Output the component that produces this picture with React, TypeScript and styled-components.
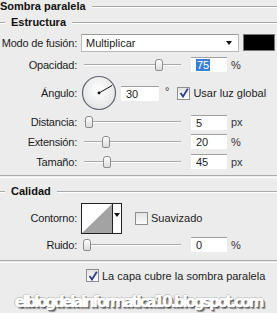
import styled, { createGlobalStyle } from "styled-components"

const Global = createGlobalStyle`
  html, body {
    margin: 0;
    padding: 0;
    background: #ececec;
  }
  body {
    font-family: "Liberation Sans", Arial, sans-serif;
    font-size: 11px;
    color: #1c1c1c;
  }
`

const Panel = styled.div`
  width: 277px;
  height: 313px;
  background: #ececec;
  overflow: hidden;
  display: flex;
  flex-direction: column;
`

const Heading = styled.div<{ $indent?: number; $h: number }>`
  display: flex;
  align-items: center;
  height: ${p => p.$h}px;
  font-weight: bold;
  color: #111;

  &::before {
    content: "";
    width: ${p => p.$indent ?? 0}px;
    margin-right: ${p => (p.$indent ? 6 : 0)}px;
    border-top: 1px solid #a9a9a9;
    box-shadow: 0 1px 0 #fff;
  }
  &::after {
    content: "";
    flex: 1;
    margin-left: 6px;
    border-top: 1px solid #a9a9a9;
    box-shadow: 0 1px 0 #fff;
  }
`

const Divider = styled.div<{ $mt: number }>`
  margin-top: ${p => p.$mt}px;
  border-top: 1px solid #a9a9a9;
  box-shadow: 0 1px 0 #fff;
  height: 1px;
`

const Row = styled.div<{ $h: number; $mt?: number }>`
  display: flex;
  align-items: center;
  height: ${p => p.$h}px;
  margin-top: ${p => p.$mt ?? 0}px;
`

const Label = styled.div`
  width: 77px;
  text-align: right;
  padding-right: 4px;
  flex: none;
  white-space: nowrap;
  letter-spacing: -0.2px;
`

const Select = styled.div`
  width: 158px;
  height: 18px;
  background: #fff;
  border: 1px solid #b8b8b8;
  border-top-color: #9a9a9a;
  display: flex;
  align-items: center;
  justify-content: space-between;
  padding: 0 6px 0 4px;
  box-sizing: border-box;
`

const Arrow = styled.span`
  width: 0;
  height: 0;
  border-left: 3.5px solid transparent;
  border-right: 3.5px solid transparent;
  border-top: 4px solid #111;
`

const Swatch = styled.div`
  width: 30px;
  height: 15px;
  margin-left: 4px;
  background: #000;
  border: 1px solid #777;
`

const Track = styled.div`
  position: relative;
  width: 97px;
  height: 16px;
  margin-left: 3px;
  flex: none;

  &::before {
    content: "";
    position: absolute;
    left: 0;
    right: 0;
    top: 7px;
    border-top: 1px solid #a8a8a8;
    border-bottom: 1px solid #fff;
  }
`

const Thumb = styled.div<{ $x: number }>`
  position: absolute;
  left: ${p => p.$x - 3}px;
  top: 2px;
  width: 6px;
  height: 10px;
  border: 1px solid #8c8c8c;
  border-radius: 3px 3px 2px 2px;
  background: linear-gradient(#fefefe, #dcdcdc);
`

const Field = styled.div<{ $w?: number; $ml?: number }>`
  width: ${p => p.$w ?? 36}px;
  height: 15px;
  margin-left: ${p => p.$ml ?? 10}px;
  background: #fff;
  border-top: 1px solid #a0a0a0;
  box-sizing: border-box;
  display: flex;
  align-items: center;
  padding-left: 5px;
  flex: none;
`

const Selected = styled.span`
  background: #3a7fd6;
  color: #fff;
  padding: 0 1px;
`

const Unit = styled.span<{ $up?: boolean }>`
  margin-left: 4px;
  color: #333;
  ${p => (p.$up ? "align-self: flex-start; margin-top: 10px; margin-left: 6px;" : "")}
`

const Check = styled.div<{ $ml?: number }>`
  display: flex;
  align-items: center;
  margin-left: ${p => p.$ml ?? 0}px;
  gap: 3px;
`

const Box = styled.div`
  width: 11px;
  height: 11px;
  border: 1px solid #8e8e8e;
  background: linear-gradient(#e4e4e4, #fbfbfb);
  display: flex;
  align-items: center;
  justify-content: center;
`

const Contour = styled.div`
  width: 41px;
  height: 31px;
  border: 1px solid #222;
  box-sizing: border-box;
  display: flex;
  background: #fff;
`

const ContourArrow = styled.div`
  flex: 1;
  border-left: 1px solid #222;
  display: flex;
  align-items: center;
  justify-content: center;
  padding-bottom: 6px;
`

const Mark = styled.div`
  margin-top: 6px;
  height: 22px;
  display: flex;
  align-items: center;
  justify-content: center;
  white-space: nowrap;
  font: 900 15px "DejaVu Sans", "Liberation Sans", sans-serif;
  letter-spacing: -2.2px;
  color: #fff;
  -webkit-text-stroke: 0.6px #fff;
  text-shadow: 1px 1px 0 #444, 2px 2px 1px #888, -1px 0 0 #aaa, 0 -1px 0 #bbb;
`

const Tick = () => (
  <svg width="10" height="10" viewBox="0 0 10 10">
    <path d="M1.5 5 L4 8.5 L8.8 0.8" fill="none" stroke="#2b3f8f" strokeWidth="1.8" />
  </svg>
)

const Dial = ({ angle }: { angle: number }) => {
  const r = (angle * Math.PI) / 180
  const x = 18 + Math.cos(r) * 15
  const y = 18 - Math.sin(r) * 15
  return (
    <svg width="36" height="36" viewBox="0 0 36 36" style={{ flex: "none" }}>
      <defs>
        <radialGradient id="dialbg" cx="50%" cy="40%" r="60%">
          <stop offset="0%" stopColor="#ffffff" />
          <stop offset="100%" stopColor="#e4e4e4" />
        </radialGradient>
      </defs>
      <circle cx="18" cy="18" r="16.5" fill="url(#dialbg)" stroke="#5e6470" strokeWidth="1.2" />
      <line x1="18" y1="18" x2={x} y2={y} stroke="#111" strokeWidth="1" />
      <circle cx="18" cy="18" r="1.4" fill="#111" />
    </svg>
  )
}

const SliderRow = ({
  label,
  pos,
  value,
  unit,
  h = 20,
  mt = 0,
}: {
  label: string
  pos: number
  value: string
  unit: string
  h?: number
  mt?: number
}) => (
  <Row $h={h} $mt={mt}>
    <Label>{label}</Label>
    <Track>
      <Thumb $x={pos} />
    </Track>
    <Field>{value}</Field>
    <Unit>{unit}</Unit>
  </Row>
)

export default function App() {
  return (
    <Panel>
      <Global />
      <Heading $h={12}>Sombra paralela</Heading>
      <Heading $h={12} $indent={5} style={{ marginTop: 4 }}>
        Estructura
      </Heading>
      <Row $h={20} $mt={5}>
        <Label>Modo de fusión:</Label>
        <Select>
          <span>Multiplicar</span>
          <Arrow />
        </Select>
        <Swatch />
      </Row>
      <Row $h={22} $mt={1}>
        <Label>Opacidad:</Label>
        <Track>
          <Thumb $x={74} />
        </Track>
        <Field>
          <Selected>75</Selected>
        </Field>
        <Unit>%</Unit>
      </Row>
      <Row $h={36}>
        <Label>Ángulo:</Label>
        <Dial angle={30} />
        <Field $w={38} $ml={4}>30</Field>
        <Unit $up>°</Unit>
        <Check $ml={8}>
          <Box>
            <Tick />
          </Box>
          <span>Usar luz global</span>
        </Check>
      </Row>
      <SliderRow label="Distancia:" pos={4} value="5" unit="px" mt={1} />
      <SliderRow label="Extensión:" pos={21} value="20" unit="%" />
      <SliderRow label="Tamaño:" pos={22} value="45" unit="px" />
      <Divider $mt={4} />
      <Heading $h={12} $indent={5} style={{ marginTop: 8 }}>
        Calidad
      </Heading>
      <Row $h={32} $mt={5}>
        <Label>Contorno:</Label>
        <Contour>
          <svg width="30" height="29" viewBox="0 0 30 29">
            <polygon points="0,29 30,0 30,29" fill="#a3a3a3" />
          </svg>
          <ContourArrow>
            <Arrow />
          </ContourArrow>
        </Contour>
        <Check $ml={13}>
          <Box />
          <span>Suavizado</span>
        </Check>
      </Row>
      <SliderRow label="Ruido:" pos={2} value="0" unit="%" mt={1} />
      <Divider $mt={5} />
      <Row $h={20} $mt={4}>
        <Check $ml={86}>
          <Box>
            <Tick />
          </Box>
          <span>La capa cubre la sombra paralela</span>
        </Check>
      </Row>
      <Mark>elblogdelainformatica10.blogspot.com</Mark>
    </Panel>
  )
}
